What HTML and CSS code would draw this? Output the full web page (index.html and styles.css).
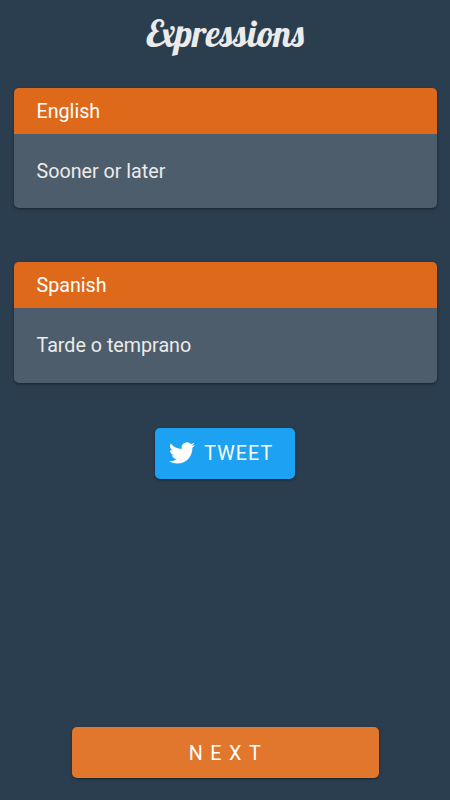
FILE: index.html
```html
<!DOCTYPE html>
<html lang="en">
<head>
    <meta charset="UTF-8">
    <meta name="viewport" content="width=device-width, initial-scale=1.0">
    <title>Expressions</title>
    <link rel="stylesheet" href="styles.css">
</head>
<body>
    <header class="title-bar">
        <h1 class="title">Expressions</h1>
    </header>

    <main class="content">
        <section class="card">
            <h2 class="card-header">English</h2>
            <p class="card-body">Sooner or later</p>
        </section>

        <section class="card">
            <h2 class="card-header">Spanish</h2>
            <p class="card-body">Tarde o temprano</p>
        </section>

        <button class="button tweet" type="button">
            <svg class="tweet-icon" viewBox="0 0 24 24" aria-hidden="true">
                <path d="M23.953 4.57a10 10 0 01-2.825.775 4.958 4.958 0 002.163-2.723c-.951.555-2.005.959-3.127 1.184a4.92 4.92 0 00-8.384 4.482C7.69 8.095 4.067 6.13 1.64 3.162a4.822 4.822 0 00-.666 2.475c0 1.71.87 3.213 2.188 4.096a4.904 4.904 0 01-2.228-.616v.06a4.923 4.923 0 003.946 4.827 4.996 4.996 0 01-2.212.085 4.936 4.936 0 004.604 3.417 9.867 9.867 0 01-6.102 2.105c-.39 0-.779-.023-1.17-.067a13.995 13.995 0 007.557 2.209c9.053 0 13.998-7.496 13.998-13.985 0-.21 0-.42-.015-.63A9.935 9.935 0 0024 4.59z"/>
            </svg>
            <span>TWEET</span>
        </button>
    </main>

    <footer class="footer">
        <button class="button next" type="button">NEXT</button>
    </footer>
</body>
</html>
```

FILE: styles.css
```css
* {
    margin: 0;
    padding: 0;
    box-sizing: border-box;
}

body {
    display: flex;
    flex-direction: column;
    height: 100vh;
    overflow: hidden;
    background-color: #2b3e50;
    color: #ebebeb;
    font-family: Roboto, "Liberation Sans", sans-serif;
    font-size: 19.7px;
}

.title-bar {
    height: 88px;
    padding-top: 11px;
    text-align: center;
}

.title {
    font-family: Lobster, "Liberation Serif", serif;
    font-size: 36.5px;
    font-weight: 400;
    line-height: 44px;
}

.content {
    flex: 1;
    display: flex;
    flex-direction: column;
    align-items: center;
    padding: 0 13.5px 0 14px;
}

.card {
    width: 100%;
    height: 120.3px;
    margin-bottom: 54.2px;
    border-radius: 5px;
    overflow: hidden;
    background-color: #4e5d6c;
    box-shadow: 0 1px 3px rgba(0, 0, 0, 0.45);
}

.card-header {
    height: 46px;
    padding-left: 22.5px;
    background-color: #df691a;
    color: #fff;
    font-size: 19.7px;
    font-weight: 400;
    line-height: 47.5px;
}

.card-body {
    padding-left: 22.5px;
    line-height: 75.5px;
}

.button {
    border: none;
    border-radius: 5px;
    color: #fff;
    font-family: inherit;
    font-size: 19.7px;
    cursor: pointer;
    box-shadow: 0 1px 3px rgba(0, 0, 0, 0.45);
}

.tweet {
    display: flex;
    align-items: center;
    width: 140px;
    height: 51px;
    margin-top: -9px;
    padding-left: 14px;
    background-color: #1da1f2;
    letter-spacing: 1.1px;
}

.tweet span {
    padding-top: 1px;
}

.tweet-icon {
    width: 26px;
    height: 26px;
    margin-right: 9px;
    fill: #fff;
}

.footer {
    display: flex;
    justify-content: center;
    height: 79px;
    padding-top: 5px;
    border-top: 1px solid #293b4c;
}

.next {
    width: 307px;
    height: 51px;
    padding: 2px 0 0 7px;
    background-color: #e1762d;
    letter-spacing: 7.6px;
}
```
